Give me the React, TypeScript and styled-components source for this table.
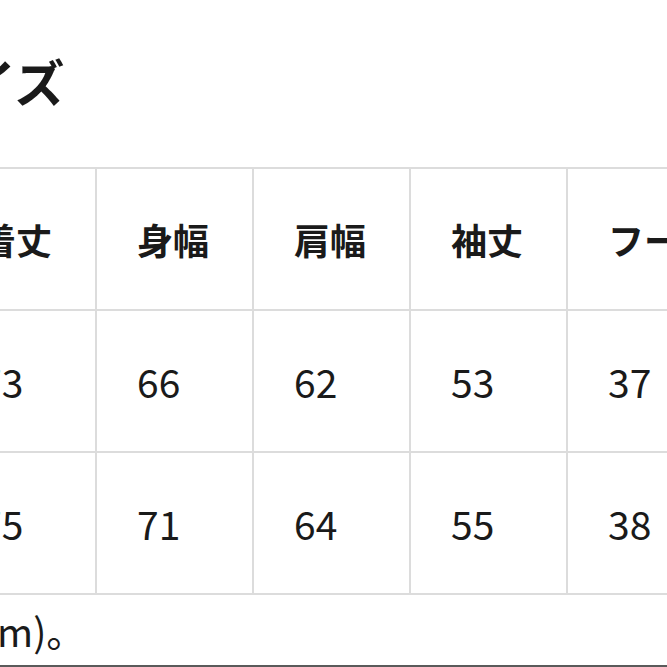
import { createGlobalStyle, styled } from 'styled-components';

const GlobalStyle = createGlobalStyle`
  html, body {
    margin: 0;
    padding: 0;
    background: #ffffff;
  }
  body {
    font-family: 'Noto Sans CJK JP', 'Noto Sans', sans-serif;
    color: #1a1a1a;
  }
`;

const Page = styled.div`
  width: 667px;
  height: 667px;
  overflow: hidden;
  background: #ffffff;
`;

const Content = styled.div`
  margin-left: -62px;
  width: 960px;
  display: flex;
  flex-direction: column;
`;

const Heading = styled.h2`
  margin: 0 0 0 -22px;
  padding: 48px 0 0 0;
  height: 167px;
  box-sizing: border-box;
  font-size: 50px;
  font-weight: 700;
  line-height: 64px;
  color: #1a1a1a;
`;

const Table = styled.table`
  border-collapse: collapse;
  table-layout: fixed;
  width: 942px;
`;

const Cell = styled.td<{ $head?: boolean }>`
  width: 157px;
  height: 142px;
  box-sizing: border-box;
  padding: 0 0 0 40px;
  border: 2px solid #dcdcdc;
  text-align: left;
  vertical-align: middle;
  font-size: ${(p) => (p.$head ? '36px' : '39px')};
  font-weight: ${(p) => (p.$head ? 700 : 400)};
  white-space: nowrap;
  color: #1a1a1a;
`;

const Note = styled.p`
  margin: 0;
  padding: 12px 0 0 26px;
  height: 70px;
  box-sizing: border-box;
  font-size: 39px;
  line-height: 46px;
  color: #1a1a1a;
`;

const Divider = styled.div`
  height: 2px;
  background: #5a5a5a;
`;

const headers = ['着丈', '身幅', '肩幅', '袖丈', 'フード', '裾幅'];
const rows = [
  ['73', '66', '62', '53', '37', '50'],
  ['75', '71', '64', '55', '38', '52'],
];

export default function App() {
  return (
    <Page>
      <GlobalStyle />
      <Content>
        <Heading>サイズ</Heading>
        <Table>
          <tbody>
            <tr>
              {headers.map((h) => (
                <Cell key={h} as="th" $head>
                  {h}
                </Cell>
              ))}
            </tr>
            {rows.map((r, i) => (
              <tr key={i}>
                {r.map((v, j) => (
                  <Cell key={j}>{v}</Cell>
                ))}
              </tr>
            ))}
          </tbody>
        </Table>
        <Note>(cm)。</Note>
        <Divider />
      </Content>
    </Page>
  );
}
